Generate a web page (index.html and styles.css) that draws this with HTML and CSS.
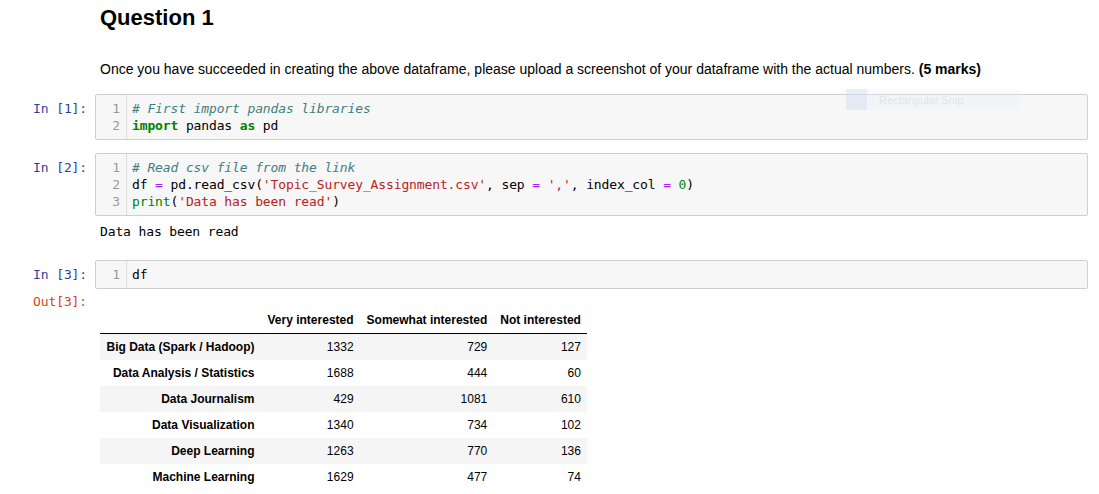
FILE: index.html
```html
<!DOCTYPE html>
<html>
<head>
<meta charset="utf-8">
<link rel="stylesheet" href="styles.css">
</head>
<body>
<div class="notebook">
  <div class="cell md-cell">
    <div class="prompt"></div>
    <div class="md-body">
      <h1 class="md-title">Question 1</h1>
      <p class="md-text">Once you have succeeded in creating the above dataframe, please upload a screenshot of your dataframe with the actual numbers. <b>(5 marks)</b></p>
    </div>
  </div>

  <div class="cell code-cell first-code">
    <div class="prompt prompt-in">In [1]:</div>
    <div class="input-area">
      <div class="gutter"><div>1</div><div>2</div></div>
      <div class="lines">
        <div class="ln"><span class="cm-comment"># First import pandas libraries</span></div>
        <div class="ln"><span class="cm-keyword">import</span> pandas <span class="cm-keyword">as</span> pd</div>
      </div>
    </div>
  </div>

  <div class="cell code-cell">
    <div class="prompt prompt-in">In [2]:</div>
    <div class="input-area">
      <div class="gutter"><div>1</div><div>2</div><div>3</div></div>
      <div class="lines">
        <div class="ln"><span class="cm-comment"># Read csv file from the link</span></div>
        <div class="ln">df <span class="cm-operator">=</span> pd.read_csv(<span class="cm-string">'Topic_Survey_Assignment.csv'</span>, sep <span class="cm-operator">=</span> <span class="cm-string">','</span>, index_col <span class="cm-operator">=</span> <span class="cm-number">0</span>)</div>
        <div class="ln"><span class="cm-builtin">print</span>(<span class="cm-string">'Data has been read'</span>)</div>
      </div>
    </div>
  </div>
  <div class="output-row stream-row">
    <div class="prompt"></div>
    <div class="stream">Data has been read</div>
  </div>

  <div class="cell code-cell third-code">
    <div class="prompt prompt-in">In [3]:</div>
    <div class="input-area">
      <div class="gutter"><div>1</div></div>
      <div class="lines">
        <div class="ln">df</div>
      </div>
    </div>
  </div>
  <div class="output-row out-row">
    <div class="prompt prompt-out">Out[3]:</div>
    <div class="out-body">
      <table class="dataframe">
        <thead>
          <tr><th></th><th>Very interested</th><th>Somewhat interested</th><th>Not interested</th></tr>
        </thead>
        <tbody>
          <tr><th>Big Data (Spark / Hadoop)</th><td>1332</td><td>729</td><td>127</td></tr>
          <tr><th>Data Analysis / Statistics</th><td>1688</td><td>444</td><td>60</td></tr>
          <tr><th>Data Journalism</th><td>429</td><td>1081</td><td>610</td></tr>
          <tr><th>Data Visualization</th><td>1340</td><td>734</td><td>102</td></tr>
          <tr><th>Deep Learning</th><td>1263</td><td>770</td><td>136</td></tr>
          <tr><th>Machine Learning</th><td>1629</td><td>477</td><td>74</td></tr>
        </tbody>
      </table>
    </div>
  </div>

  <div class="snip-ghost">
    <span class="snip-icon"></span>
    <span class="snip-label">Rectangular Snip</span>
  </div>
</div>
</body>
</html>
```

FILE: styles.css
```css
html, body {
  margin: 0;
  padding: 0;
  background: #ffffff;
}

body {
  font-family: "Liberation Sans", Arial, sans-serif;
  color: #000;
}

.notebook {
  position: relative;
  padding: 5px 11px 0 0;
}

.cell,
.output-row {
  display: flex;
  align-items: flex-start;
}

.prompt {
  flex: 0 0 95px;
  box-sizing: border-box;
  padding-right: 8px;
  text-align: right;
  font-family: "DejaVu Sans Mono", monospace;
  font-size: 13px;
  letter-spacing: -0.13px;
  line-height: 17px;
  white-space: nowrap;
}

.prompt-in {
  color: #303F9F;
  padding-top: 6px;
}

.prompt-out {
  color: #D84315;
}

.md-body {
  flex: 1;
  padding-left: 5px;
}

.md-title {
  margin: 0;
  font-size: 22px;
  line-height: 26px;
  font-weight: bold;
}

.md-text {
  margin: 28px 0 0 0;
  font-size: 14px;
  line-height: 20px;
}

.code-cell {
  margin-top: 13px;
}

.first-code {
  margin-top: 15px;
}

.third-code {
  margin-top: 20px;
}

.input-area {
  flex: 1;
  display: flex;
  background: #f7f7f7;
  border: 1px solid #cfcfcf;
  border-radius: 2px;
  font-family: "DejaVu Sans Mono", monospace;
  font-size: 13px;
  letter-spacing: -0.13px;
  line-height: 17px;
}

.gutter {
  flex: 0 0 31px;
  box-sizing: border-box;
  padding: 5px 6px 5px 0;
  text-align: right;
  color: #999999;
  border-right: 1px solid #dddddd;
}

.lines {
  flex: 1;
  padding: 5px 0 5px 5px;
  color: #000;
}

.ln {
  white-space: pre;
}

.cm-comment {
  color: #408080;
  font-style: italic;
}

.cm-keyword {
  color: #008000;
  font-weight: bold;
}

.cm-builtin {
  color: #008000;
}

.cm-operator {
  color: #AA22FF;
}

.cm-string {
  color: #BA2121;
}

.cm-number {
  color: #008800;
}

.stream-row {
  margin-top: 7px;
}

.stream {
  flex: 1;
  padding-left: 5px;
  font-family: "DejaVu Sans Mono", monospace;
  font-size: 13px;
  letter-spacing: -0.13px;
  line-height: 17px;
  white-space: pre;
}

.out-row {
  margin-top: 4px;
}

.out-body {
  flex: 1;
  padding-left: 5px;
  padding-top: 14px;
}

.dataframe {
  border-collapse: collapse;
  border-spacing: 0;
  font-family: "Liberation Sans", Arial, sans-serif;
  font-size: 12px;
  color: #000;
}

.dataframe th,
.dataframe td {
  padding: 6px 6.5px;
  line-height: 14px;
  text-align: right;
  vertical-align: middle;
  white-space: nowrap;
}

.dataframe th {
  font-weight: bold;
}

.dataframe thead tr {
  border-bottom: 1px solid #000;
}

.dataframe tbody tr:nth-child(odd) {
  background: #f5f5f5;
}

.snip-ghost {
  position: absolute;
  left: 846px;
  top: 89px;
  width: 174px;
  height: 21px;
  display: flex;
  align-items: center;
  gap: 12px;
  background: rgba(235, 240, 247, 0.3);
}

.snip-icon {
  width: 21px;
  height: 21px;
  background: rgba(205, 220, 240, 0.4);
}

.snip-label {
  font-family: "Liberation Sans", Arial, sans-serif;
  font-size: 11px;
  color: rgba(200, 207, 218, 0.45);
}
```
